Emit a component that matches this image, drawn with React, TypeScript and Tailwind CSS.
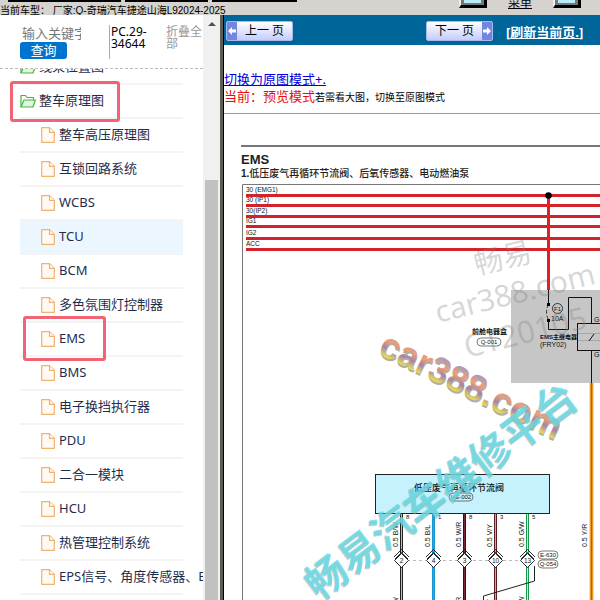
import { Fragment } from 'react';

type MenuItem = { name: string; kind: 'folder' | 'file'; active?: boolean; marked?: boolean };

const menuItems: MenuItem[] = [
  { name: '线束位置图', kind: 'folder' },
  { name: '整车原理图', kind: 'folder', marked: true },
  { name: '整车高压原理图', kind: 'file' },
  { name: '互锁回路系统', kind: 'file' },
  { name: 'WCBS', kind: 'file' },
  { name: 'TCU', kind: 'file', active: true },
  { name: 'BCM', kind: 'file' },
  { name: '多色氛围灯控制器', kind: 'file' },
  { name: 'EMS', kind: 'file', marked: true },
  { name: 'BMS', kind: 'file' },
  { name: '电子换挡执行器', kind: 'file' },
  { name: 'PDU', kind: 'file' },
  { name: '二合一模块', kind: 'file' },
  { name: 'HCU', kind: 'file' },
  { name: '热管理控制系统', kind: 'file' },
  { name: 'EPS信号、角度传感器、EPB', kind: 'file' },
];

const powerRails = [
  { label: '30 (EMG1)', y: 195 },
  { label: '30 (IP1)', y: 205 },
  { label: '30(IP2)', y: 216 },
  { label: 'IG1', y: 226 },
  { label: 'IG2', y: 238 },
  { label: 'ACC', y: 249 },
];

// 节流阀插头针脚
const pins = [
  { x: 401, pin: '8', no: '2', label: '0.5 B/W', edge: '#222222', core: '#bdbdbd' },
  { x: 433, pin: '1', no: '4', label: '0.5 B/L', edge: '#1c9ad6', core: '#1fa5e4' },
  { x: 464, pin: '8', no: '3', label: '0.5 W/R', edge: '#3a1015', core: '#7a2a33' },
  { x: 495, pin: '3', no: '10', label: '0.5 V/Y', edge: '#5e1c1c', core: '#e8a07c' },
  { x: 527, pin: '5', no: '13', label: '0.5 G/W', edge: '#189a4c', core: '#d5f2df' },
];

function FolderIcon() {
  return (
    <svg className="h-4 w-4 shrink-0" viewBox="0 0 16 16" fill="none" stroke="#45b53e" strokeWidth="1.2" strokeLinejoin="round">
      <path d="M1 14V2.500h4.500L7 4.500h6.500V7" />
      <path d="M1 14 4 7H15.400L13 14Z" fill="#e3f5e0" />
    </svg>
  );
}

function FileIcon() {
  return (
    <svg className="h-4 w-[14px] shrink-0" viewBox="0 0 14 16" fill="#fffaf3" stroke="#f0b36e" strokeWidth="1.2" strokeLinejoin="round">
      <path d="M.7 .7H8.500L13.300 5.300V15.300H.7Z" />
      <path d="M8.500 .7V5.300H13.300" />
    </svg>
  );
}

function Sidebar() {
  return (
    <aside className="flex w-[223px] shrink-0 border-r-3 border-[#5c5c56] bg-white">
      <div className="flex min-w-0 flex-1 flex-col overflow-hidden">
        <div className="flex h-[54px] shrink-0 items-start border-b border-dashed border-[#bbb] pt-[10px] pl-5">
          <div className="w-[89px]">
            <input
              aria-label="输入关键字"
              placeholder="输入关键字"
              className="block h-4 w-[61px] pl-[2px] text-[13px] leading-4 outline-none placeholder:text-[#777]"
            />
            <button className="mt-px block h-[17px] w-[47px] rounded-[3px] bg-[#0073cf] text-[13px] leading-[17px] text-white">
              查询
            </button>
          </div>
          <div className="h-[34px] w-[57px] border-l border-[#aaa] pt-px pl-px text-[12px] leading-[12px] text-black">
            PC.29-
            <br />
            34644
          </div>
          <button className="w-[37px] pt-px text-left text-[12px] leading-[12px] text-[#999]">折叠全部</button>
        </div>
        <nav className="min-h-0 flex-1 overflow-hidden">
          <ul className="-mt-[18px] ml-5 w-[163px]">
            {menuItems.map((item) => (
              <li
                key={item.name}
                className={`relative h-[34px] border-b-2 border-[#f4f4f4] ${item.active ? 'bg-[#ebf6ff]' : ''}`}
              >
                <a
                  href="#"
                  className={`flex h-8 items-center text-[13px] whitespace-nowrap text-[#1f2d4d] ${
                    item.kind === 'folder' ? 'gap-[3px]' : 'gap-1 pl-[21px]'
                  }`}
                >
                  {item.kind === 'folder' ? <FolderIcon /> : <FileIcon />}
                  {item.name}
                </a>
                {/* 红框标注 */}
                {item.marked && (
                  <span
                    className={`pointer-events-none absolute rounded-[3px] border-3 border-[#f26474] ${
                      item.kind === 'folder'
                        ? '-top-[4px] -left-[10px] h-[41px] w-[110px]'
                        : '-top-[7px] left-[3px] h-[45px] w-[83px]'
                    }`}
                  />
                )}
              </li>
            ))}
          </ul>
        </nav>
      </div>
      {/* 滚动条 */}
      <div className="flex w-[17px] shrink-0 flex-col items-center bg-[#f0f0f0] pt-[7px]">
        <svg className="h-1 w-2 shrink-0" viewBox="0 0 8 4">
          <path d="M0 4 4 0 8 4Z" fill="#505050" />
        </svg>
        <div className="mt-[154px] w-[13px] flex-1 bg-[#c1c1c1]" />
      </div>
    </aside>
  );
}

function Oval({ x, y, w, children }: { x: number; y: number; w: number; children: string }) {
  return (
    <g>
      <rect x={x - w / 2} y={y - 4} width={w} height="8" rx="4" fill="none" stroke="#444" strokeWidth=".7" />
      <text x={x} y={y + 2} fontSize="6" textAnchor="middle">{children}</text>
    </g>
  );
}

function WiringDiagram() {
  return (
    <svg
      className="block h-[480px] w-[520px] shrink-0 font-['Liberation_Sans','Noto_Sans_CJK_SC',sans-serif] text-[7px]"
      viewBox="241 183 520 480"
      fill="#111"
    >
      <defs>
        <linearGradient id="logoFill" x1="0" y1="0" x2="0" y2="1">
          <stop offset=".25" stopColor="#b79ab0" />
          <stop offset=".42" stopColor="#f0a070" />
          <stop offset=".6" stopColor="#a483ac" />
          <stop offset=".8" stopColor="#eadf50" />
        </linearGradient>
      </defs>
      <path d="M242.500 700V184.500H800" fill="none" stroke="#777" />

      <rect x="511" y="290" width="250" height="93" fill="#c6c6c6" />

      {powerRails.map((rail) => (
        <g key={rail.label}>
          <text x="246" y={rail.y - 3} fontSize="6.500">{rail.label}</text>
          <path d={`M246 ${rail.y + 0.5}H800`} stroke="#d3222a" strokeWidth="3" />
        </g>
      ))}
      <path d="M548.500 195V290" stroke="#e31e26" strokeWidth="3" />
      <circle cx="548.500" cy="195.500" r="3.300" fill="#000" />

      {/* 前舱电器盒: 保险丝与继电器 */}
      <g fill="none" stroke="#111">
        <path d="M548.500 290V304M548.500 320V329.500H568.500V297.500H591.500V323" />
        <path d="M548.500 304Q544.500 312 548.500 320" strokeDasharray="4 2" strokeWidth=".8" />
        <circle cx="557.500" cy="308.500" r="5" strokeWidth=".8" />
        <rect x="577.500" y="323.500" width="60" height="27" />
        <path d="M578 333.500H638M578 340.500H638" stroke="#999" strokeWidth=".7" />
        <path d="M589 341 594 334M591.500 351V383" />
      </g>
      <path d="M547 303h3v3h-3zM547 319h3v3h-3z" fill="#000" />
      <text x="554" y="311" fontSize="6">F1</text>
      <text x="551" y="321">10A</text>
      <text x="594" y="322">G-1</text>
      <text x="594" y="357">G-3</text>
      <text x="540" y="339" fontWeight="600" fontSize="6">EMS主继电器</text>
      <text x="540" y="347">(FRY02)</text>
      <text x="472" y="334" fontWeight="600">前舱电器盒</text>
      <Oval x={489} y={342} w={24}>Q-001</Oval>

      {/* 执行器 */}
      <rect x="375.500" y="474.500" width="174" height="39" fill="#c5f2fc" stroke="#222" />
      <text x="414" y="491" fontSize="9" fontWeight="500">低压废气再循环节流阀</text>
      <Oval x={461} y={497} w={24}>HE-002</Oval>

      <path d="M401 560.500H527" stroke="#aaa" strokeDasharray="3 3" strokeWidth=".8" />
      {pins.map(({ x, pin, no, label, edge, core }) => (
        <Fragment key={x}>
          <path d={`M${x + 0.5} 514V553M${x + 0.5} 567V700`} stroke={edge} strokeWidth="3" />
          <path d={`M${x + 0.5} 514V553M${x + 0.5} 567V700`} stroke={core} />
          <path
            d={`M${x - 7} 557 ${x + 0.5} 549.500 ${x + 8} 557M${x - 6} 559 ${x + 0.5} 552.500 ${x + 7} 559`}
            fill="none"
            stroke="#111"
            strokeWidth=".9"
          />
          <path
            d={`M${x + 0.5} 553.500 ${x + 7.5} 560.500 ${x + 0.5} 567.500 ${x - 6.5} 560.500Z`}
            fill="#fff"
            stroke="#111"
            strokeWidth=".9"
          />
          <text x={x + 0.5} y="563" fontSize="6.500" textAnchor="middle">{no}</text>
          <text x={x + 5} y="519" fontSize="6">{pin}</text>
          <text transform={`translate(${x - 3} 547) rotate(-90)`}>{label}</text>
          <text transform={`translate(${x - 3} 622) rotate(-90)`}>{label}</text>
        </Fragment>
      ))}
      <Oval x={548} y={555} w={20}>E-630</Oval>
      <Oval x={548} y={564} w={20}>Q-054</Oval>
      <path d="M534.500 566V581L483.500 596V660" fill="none" stroke="#222" />

      <path d="M591.500 383V700" stroke="#f5b62a" strokeWidth="4" />
      <path d="M591.500 383V700" stroke="#d9481f" strokeWidth="1.500" />
      <text transform="translate(587 547) rotate(-90)">0.5 Y/R</text>

      {/* 水印 */}
      <g fill="#808080" fillOpacity=".32" className="font-['Noto_Sans','Noto_Sans_CJK_SC',sans-serif]">
        <text transform="translate(477 275) rotate(-14)" fontSize="29">畅易</text>
        <text transform="translate(438 323) rotate(-14)" fontSize="30">car388.com</text>
        <text transform="translate(467 358) rotate(-14)" fontSize="31">CT20105</text>
      </g>
      <g fontWeight="700">
        <g transform="translate(377 353) rotate(26)" fontSize="36">
          <text x="1" y="2" fill="#777" fillOpacity=".6">car388.com</text>
          <text fill="url(#logoFill)">car388.com</text>
        </g>
        <g transform="translate(319 601) rotate(-37)" fontSize="41" fillOpacity=".8">
          <text x="-1" y="1" fill="#999" fillOpacity=".5">畅易汽车维修平台</text>
          <text fill="#62dbe6">畅易汽车维修平台</text>
        </g>
      </g>
    </svg>
  );
}

function PageButton({ label, next = false }: { label: string; next?: boolean }) {
  const arrow = (
    <span className="flex w-[10px] items-center justify-center bg-[#7086e0]">
      <svg className="h-2 w-2" viewBox="0 0 8 8" fill="#fff">
        <path d={next ? 'M8 4 4 0V2.500H0V5.500H4V8Z' : 'M0 4 4 0V2.500H8V5.500H4V8Z'} />
      </svg>
    </span>
  );
  return (
    <button className="flex h-5 w-[67px] overflow-hidden rounded-[2px] border border-[#a9b6f2] bg-linear-to-b from-white to-[#c3cdfa] text-[12px] leading-[18px] text-black">
      {!next && arrow}
      <span className="flex-1 whitespace-nowrap">{label}</span>
      {next && arrow}
    </button>
  );
}

function ToolButton({ label }: { label: string }) {
  return (
    <button
      aria-label={label}
      className="h-2 w-7 border-r-3 border-b-3 border-l-2 border-black border-l-[#eee] bg-[#777] px-[3px] pb-[2px]"
    >
      <span className="block h-full bg-[#b8ecf8]" />
    </button>
  );
}

export default function App() {
  return (
    <div className="flex h-screen flex-col overflow-hidden bg-white font-['Noto_Sans','Noto_Sans_CJK_SC',sans-serif]">
      <header className="flex h-[15px] shrink-0 overflow-hidden bg-[#d6d3ce]">
        <div className="w-[297px] shrink-0">
          <div className="flex h-[2px] gap-1 pl-2">
            <span className="w-[113px] bg-black" />
            <span className="w-[83px] bg-black" />
            <span className="flex-1 bg-black" />
          </div>
          <p className="mt-[3px] font-['Liberation_Sans','Noto_Sans_CJK_SC',sans-serif] text-[10px] leading-[12px] whitespace-nowrap text-black">
            当前车型： 厂家:Q-奇瑞汽车捷途山海L92024-2025
          </p>
        </div>
        <div className="ml-[162px] flex items-start">
          <ToolButton label="目录" />
          <a href="#" className="mx-[21px] -mt-[4px] text-[12px] leading-[14px] text-black underline">
            菜单
          </a>
          <ToolButton label="窗口" />
        </div>
      </header>

      <div className="flex min-h-0 flex-1">
        <Sidebar />
        <main className="min-w-0 flex-1 overflow-hidden border-l border-black">
          <div className="flex h-[30px] items-center bg-[#006699] pt-[2px] pl-[2px]">
            <PageButton label="上一 页" />
            <div className="ml-[133px] flex items-center gap-[13px]">
              <PageButton label="下一 页" next />
              <a href="#" className="pt-[2px] text-[13px] leading-5 font-bold whitespace-nowrap text-white">
                [<span className="underline">刷新当前页.</span>]
              </a>
            </div>
          </div>

          <div className="pt-[25px] pb-[7px] whitespace-nowrap">
            <a href="#" className="block text-[13px] leading-[18px] text-[#0000e0] underline">
              切换为原图模式+.
            </a>
            <p className="text-[13px] leading-[17px] text-[#e01010]">
              当前：预览模式<span className="text-[10px] text-black">若需看大图，切换至原图模式</span>
            </p>
          </div>
          <hr className="border-[#999]" />

          <article className="pt-[31px] pl-[17px]">
            <div className="border-t-2 border-[#777] pt-[6px] whitespace-nowrap text-[#222]">
              <h1 className="font-['Liberation_Sans',sans-serif] text-[13px] leading-[14px] font-bold">EMS</h1>
              <h2 className="pb-[2px] font-['Liberation_Sans','Noto_Sans_CJK_SC',sans-serif] text-[10px] leading-[14px] font-medium">
                <b>1.</b>低压废气再循环节流阀、后氧传感器、电动燃油泵
              </h2>
            </div>
            <WiringDiagram />
          </article>
        </main>
      </div>
    </div>
  );
}
